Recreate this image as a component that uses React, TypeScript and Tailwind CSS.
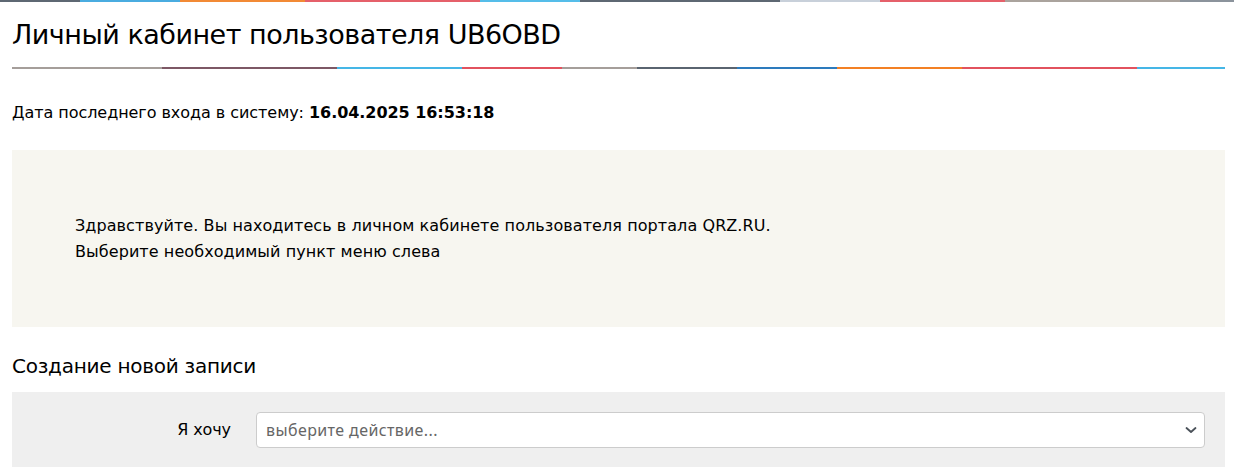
// ─── Decorative stripes (segment widths measured off the header art) ─────────

type Seg = { w: number; cls: string };

const TOP_STRIPE: Seg[] = [
  { w: 80, cls: 'bg-[#5e6873]' },
  { w: 100, cls: 'bg-[#4aace0]' },
  { w: 125, cls: 'bg-[#f28a35]' },
  { w: 175, cls: 'bg-[#e5606a]' },
  { w: 100, cls: 'bg-[#55bde9]' },
  { w: 200, cls: 'bg-[#5e6873]' },
  { w: 100, cls: 'bg-[#c8d0da]' },
  { w: 125, cls: 'bg-[#e5606a]' },
  { w: 175, cls: 'bg-[#aaa39d]' },
  { w: 54, cls: 'bg-[#8b939c]' },
];

const TITLE_STRIPE: Seg[] = [
  { w: 150, cls: 'bg-[#a59e9a]' },
  { w: 175, cls: 'bg-[#7d5865]' },
  { w: 125, cls: 'bg-[#45b6e6]' },
  { w: 100, cls: 'bg-[#e2525e]' },
  { w: 75, cls: 'bg-[#a59e9a]' },
  { w: 100, cls: 'bg-[#5a6470]' },
  { w: 100, cls: 'bg-[#2d7bbd]' },
  { w: 125, cls: 'bg-[#f38024]' },
  { w: 175, cls: 'bg-[#e2525e]' },
  { w: 88, cls: 'bg-[#45b6e6]' },
];

function Stripe({ segs, className }: { segs: Seg[]; className: string }) {
  return (
    <div className={`flex ${className}`}>
      {segs.map((s, i) => (
        <div key={i} className={`h-full shrink-0 ${s.cls}`} style={{ width: s.w }} />
      ))}
    </div>
  );
}

// ─── Page ────────────────────────────────────────────────────────────────────

export default function App() {
  return (
    <div className="w-[1234px] h-[473px] overflow-hidden bg-white text-black font-['DejaVu_Sans',sans-serif]">
      <Stripe segs={TOP_STRIPE} className="h-[2px]" />

      <div className="px-3">
        {/* Title */}
        <h1 className="pt-[16px] text-[27px] leading-[34px] tracking-[-0.5px]">
          Личный кабинет пользователя UB6OBD
        </h1>
        <Stripe segs={TITLE_STRIPE} className="h-[2px] mt-[15px] w-[1213px]" />

        {/* Last login */}
        <p className="mt-[33px] text-[16px] leading-[22px] tracking-[-0.05px]">
          Дата последнего входа в систему: <b>16.04.2025 16:53:18</b>
        </p>

        {/* Welcome box */}
        <div className="mt-[26px] w-[1213px] h-[177px] bg-[#f7f6f0] pl-[63px] pt-[63px] text-[16px] leading-[26px] tracking-[0.08px]">
          <p>Здравствуйте. Вы находитесь в личном кабинете пользователя портала QRZ.RU.</p>
          <p>Выберите необходимый пункт меню слева</p>
        </div>

        {/* New record */}
        <h2 className="mt-[24px] text-[20px] leading-[30px] tracking-[-0.25px]">Создание новой записи</h2>
        <div className="mt-[11px] w-[1213px] h-[75px] bg-[#efefef] flex items-center pr-[20px]">
          <label className="w-[219px] text-right text-[16px] tracking-[-0.1px]">Я хочу</label>
          <div className="ml-[25px] flex-1 h-[36px] bg-white border border-[#cccccc] rounded-[4px] flex items-center justify-between pl-[9px] pr-[7px] font-['Noto_Sans',sans-serif] text-[16px] tracking-[0.4px] text-[#666666]">
            <span>выберите действие...</span>
            <svg width="12" height="8" viewBox="0 0 12 8" fill="none" aria-hidden="true">
              <path d="M1.5 2L6 6L10.5 2" stroke="#4b525a" strokeWidth="1.8" strokeLinecap="round" strokeLinejoin="round" />
            </svg>
          </div>
        </div>
      </div>
    </div>
  );
}
